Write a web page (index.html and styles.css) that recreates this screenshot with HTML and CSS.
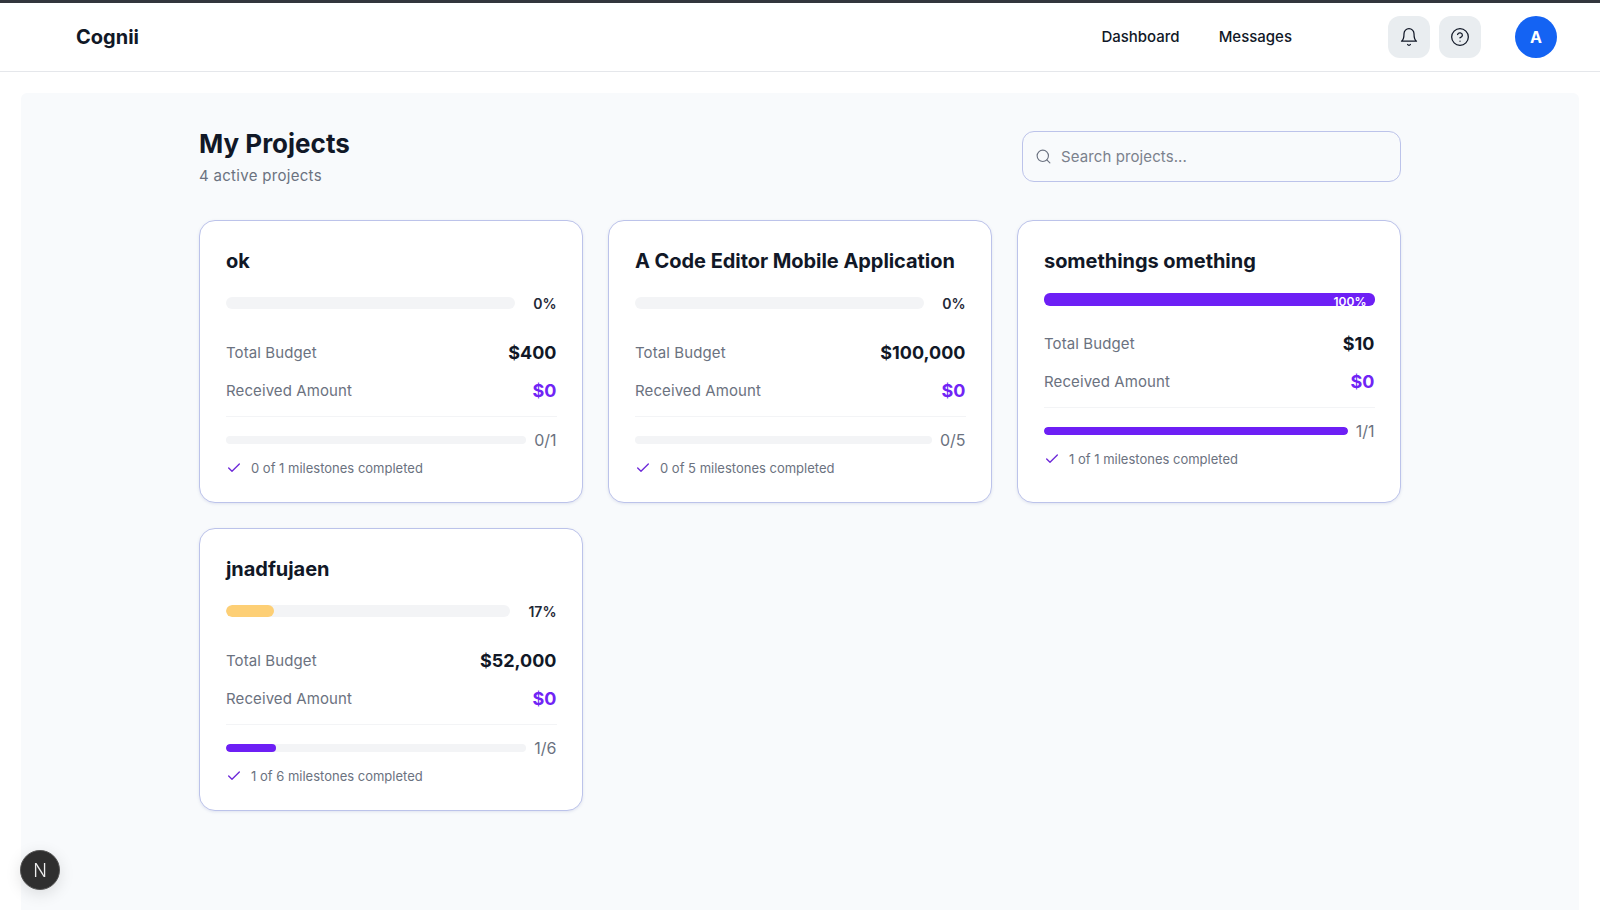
FILE: index.html
```html
<!DOCTYPE html>
<html lang="en">
<head>
  <meta charset="UTF-8">
  <meta name="viewport" content="width=device-width, initial-scale=1.0">
  <title>Cognii - My Projects</title>
  <link rel="stylesheet" href="styles.css">
</head>
<body>
  <header class="topbar">
    <a class="logo" href="#">Cognii</a>
    <nav class="nav">
      <a href="#">Dashboard</a>
      <a href="#">Messages</a>
    </nav>
    <div class="actions">
      <button class="icon-btn" aria-label="Notifications">
        <svg viewBox="0 0 24 24" width="20" height="20" fill="none" stroke="#111827" stroke-width="1.5" stroke-linecap="round" stroke-linejoin="round"><path d="M18 8a6 6 0 0 0-12 0c0 7-3 9-3 9h18s-3-2-3-9"/><path d="M13.7 21a2 2 0 0 1-3.4 0"/></svg>
      </button>
      <button class="icon-btn" aria-label="Help">
        <svg viewBox="0 0 24 24" width="20" height="20" fill="none" stroke="#111827" stroke-width="1.5" stroke-linecap="round" stroke-linejoin="round"><circle cx="12" cy="12" r="10"/><path d="M9.1 9a3 3 0 0 1 5.8 1c0 2-3 3-3 3"/><path d="M12 17h.01"/></svg>
      </button>
      <div class="avatar">A</div>
    </div>
  </header>

  <main class="panel">
    <div class="content">
      <div class="page-head">
        <div>
          <h1>My Projects</h1>
          <p class="subtitle">4 active projects</p>
        </div>
        <label class="search">
          <svg viewBox="0 0 24 24" width="17" height="17" fill="none" stroke="#6b7280" stroke-width="1.6" stroke-linecap="round"><circle cx="11" cy="11" r="8"/><path d="m21 21-4.3-4.3"/></svg>
          <input type="text" placeholder="Search projects...">
        </label>
      </div>

      <div class="grid">
        <article class="card">
          <h2>ok</h2>
          <div class="progress">
            <div class="track"></div>
            <span class="pct">0%</span>
          </div>
          <div class="row"><span>Total Budget</span><strong>$400</strong></div>
          <div class="row"><span>Received Amount</span><strong class="purple">$0</strong></div>
          <div class="milestones">
            <div class="track thin"></div>
            <span class="count">0/1</span>
          </div>
          <p class="note"><svg viewBox="0 0 24 24" width="16" height="16" fill="none" stroke="#6d28d9" stroke-width="2" stroke-linecap="round" stroke-linejoin="round"><path d="M20 6 9 17l-5-5"/></svg>0 of 1 milestones completed</p>
        </article>

        <article class="card">
          <h2>A Code Editor Mobile Application</h2>
          <div class="progress">
            <div class="track"></div>
            <span class="pct">0%</span>
          </div>
          <div class="row"><span>Total Budget</span><strong>$100,000</strong></div>
          <div class="row"><span>Received Amount</span><strong class="purple">$0</strong></div>
          <div class="milestones">
            <div class="track thin"></div>
            <span class="count">0/5</span>
          </div>
          <p class="note"><svg viewBox="0 0 24 24" width="16" height="16" fill="none" stroke="#6d28d9" stroke-width="2" stroke-linecap="round" stroke-linejoin="round"><path d="M20 6 9 17l-5-5"/></svg>0 of 5 milestones completed</p>
        </article>

        <article class="card">
          <h2>somethings omething</h2>
          <div class="full-bar"><span>100%</span></div>
          <div class="row"><span>Total Budget</span><strong>$10</strong></div>
          <div class="row"><span>Received Amount</span><strong class="purple">$0</strong></div>
          <div class="milestones">
            <div class="track thin"><div class="fill" style="width: 100%"></div></div>
            <span class="count">1/1</span>
          </div>
          <p class="note"><svg viewBox="0 0 24 24" width="16" height="16" fill="none" stroke="#6d28d9" stroke-width="2" stroke-linecap="round" stroke-linejoin="round"><path d="M20 6 9 17l-5-5"/></svg>1 of 1 milestones completed</p>
        </article>

        <article class="card">
          <h2>jnadfujaen</h2>
          <div class="progress">
            <div class="track"><div class="fill yellow" style="width: 17%"></div></div>
            <span class="pct">17%</span>
          </div>
          <div class="row"><span>Total Budget</span><strong>$52,000</strong></div>
          <div class="row"><span>Received Amount</span><strong class="purple">$0</strong></div>
          <div class="milestones">
            <div class="track thin"><div class="fill" style="width: 16.67%"></div></div>
            <span class="count">1/6</span>
          </div>
          <p class="note"><svg viewBox="0 0 24 24" width="16" height="16" fill="none" stroke="#6d28d9" stroke-width="2" stroke-linecap="round" stroke-linejoin="round"><path d="M20 6 9 17l-5-5"/></svg>1 of 6 milestones completed</p>
        </article>
      </div>
    </div>
  </main>

  <button class="dev-badge" aria-label="Next.js dev tools">N</button>
</body>
</html>
```

FILE: styles.css
```css
* {
  box-sizing: border-box;
}
html,
body {
  height: 100%;
}
body {
  margin: 0;
  border-top: 3px solid #33363d;
  background-color: #fff;
  color: #111827;
  font-family: Inter, "Noto Sans", sans-serif;
  overflow: hidden;
}
a {
  color: inherit;
  text-decoration: none;
}
.topbar {
  display: flex;
  align-items: center;
  height: 69px;
  padding: 0 43px 1px 76px;
  border-bottom: 1px solid #e5e7eb;
}
.logo {
  font-size: 20px;
  font-weight: 700;
}
.nav {
  display: flex;
  gap: 39px;
  margin-left: auto;
  margin-right: 96px;
  font-size: 15px;
  font-weight: 500;
}
.actions {
  display: flex;
  align-items: center;
  gap: 9px;
}
.icon-btn {
  display: flex;
  align-items: center;
  justify-content: center;
  width: 42px;
  height: 42px;
  padding: 0;
  border: none;
  border-radius: 12px;
  background-color: #e9edf0;
}
.avatar {
  display: flex;
  align-items: center;
  justify-content: center;
  width: 42px;
  height: 42px;
  margin-left: 25px;
  border-radius: 50%;
  background-color: #1463f3;
  color: #fff;
  font-size: 16px;
  font-weight: 700;
}
.panel {
  height: calc(100% - 69px - 21px);
  margin: 21px 21px 0;
  border-radius: 6px 6px 0 0;
  background-color: #f8fafc;
}
.content {
  width: 1202px;
  margin-left: 178px;
  padding-top: 35px;
}
.page-head {
  display: flex;
  justify-content: space-between;
  margin-bottom: 34px;
}
h1 {
  margin: 0;
  font-size: 26px;
  line-height: 32px;
  font-weight: 700;
}
.subtitle {
  margin: 6px 0 0;
  color: #6b7280;
  font-size: 15px;
  line-height: 20px;
  letter-spacing: 0.3px;
}
.search {
  display: flex;
  align-items: center;
  gap: 9px;
  width: 379px;
  height: 51px;
  margin-top: 3px;
  padding: 0 12px;
  border: 1px solid #bcc3ea;
  border-radius: 12px;
}
.search input {
  flex: 1;
  padding: 0;
  border: none;
  outline: none;
  background: transparent;
  font-family: inherit;
  font-size: 15px;
  letter-spacing: 0.1px;
}
.search input::placeholder {
  color: #7b818c;
}
.grid {
  display: grid;
  grid-template-columns: repeat(3, 384px);
  column-gap: 25px;
  row-gap: 25px;
}
.card {
  height: 283px;
  padding: 26px 25.5px 26px 26px;
  border: 1px solid #bcc3ea;
  border-radius: 16px;
  background-color: #fff;
  box-shadow: 0 1px 3px rgba(90, 100, 170, 0.15);
}
h2 {
  margin: 0 0 16px;
  font-size: 20px;
  line-height: 28px;
  font-weight: 700;
  letter-spacing: -0.05px;
}
.progress {
  display: flex;
  align-items: center;
  gap: 18px;
  height: 24px;
  margin-bottom: 18px;
}
.track {
  flex: 1;
  height: 12px;
  border-radius: 6px;
  background-color: #f3f4f6;
  overflow: hidden;
}
.track.thin {
  height: 8px;
}
.fill {
  height: 100%;
  border-radius: 6px;
  background-color: #6d1ff5;
}
.fill.yellow {
  background-color: #fdcf75;
}
.pct {
  color: #1f2937;
  font-size: 14px;
  font-weight: 600;
}
.full-bar {
  height: 13px;
  margin: 18px 0 18px;
  padding-right: 8px;
  border-radius: 6px;
  background-color: #6d1ff5;
  color: #fff;
  font-size: 12px;
  font-weight: 600;
  line-height: 17px;
  text-align: right;
  overflow: hidden;
}
.row {
  display: flex;
  justify-content: space-between;
  align-items: center;
  height: 38px;
  color: #6b7280;
  font-size: 15px;
  letter-spacing: 0.1px;
}
.row strong {
  color: #111827;
  font-size: 18px;
  font-weight: 700;
  letter-spacing: 0;
}
.row strong.purple {
  color: #7024f5;
}
.milestones {
  display: flex;
  align-items: center;
  gap: 8px;
  height: 36px;
  margin-top: 7px;
  padding-top: 10px;
  border-top: 1px solid #f3f4f6;
  color: #6b7280;
  font-size: 16px;
}
.note {
  display: flex;
  align-items: center;
  gap: 9px;
  margin: 7px 0 0;
  color: #6b7280;
  font-size: 13px;
  line-height: 18px;
}
.dev-badge {
  position: fixed;
  left: 20px;
  bottom: 20px;
  width: 40px;
  height: 40px;
  padding: 0;
  border: 1px solid #555;
  border-radius: 50%;
  background-color: #2f2f2f;
  box-shadow: 0 4px 16px rgba(0, 0, 0, 0.12);
  color: #eee;
  font-family: Inter, sans-serif;
  font-size: 18px;
  font-weight: 300;
}
```
